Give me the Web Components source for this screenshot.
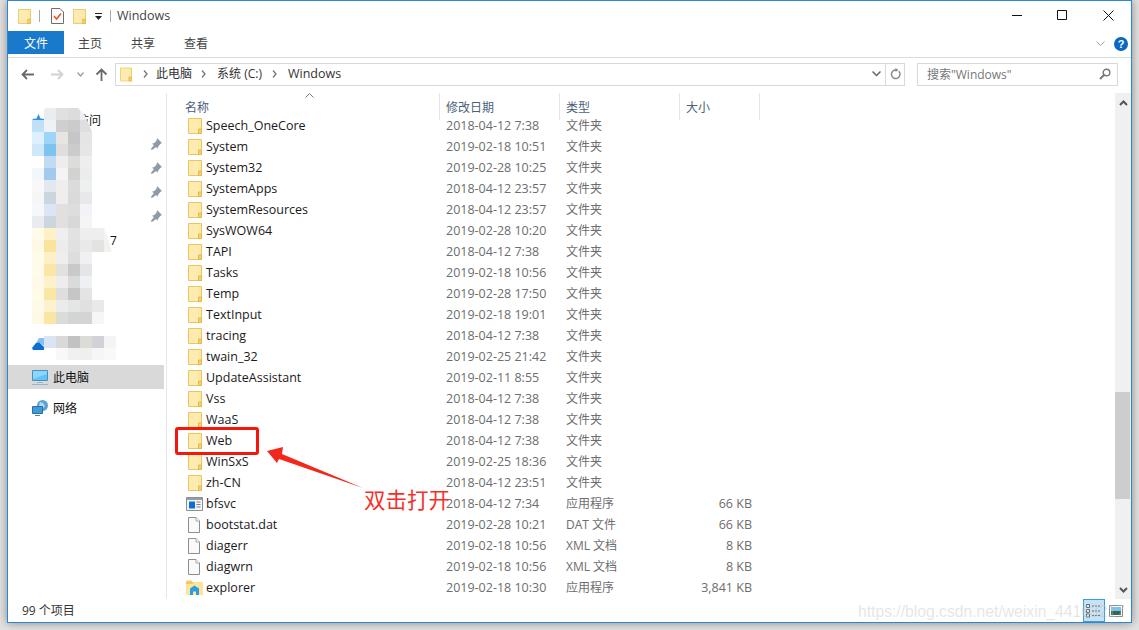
<!DOCTYPE html>
<html lang="zh-CN">
<head>
<meta charset="utf-8">
<title>Windows</title>
<style>
  html, body { margin: 0; height: 100%; background: #e2e2e2; overflow: hidden; }
  body { font-family: "Open Sans", "Noto Sans CJK SC", sans-serif; }
</style>
</head>
<body>
<explorer-window>
  <title-bar></title-bar>
  <ribbon-tabs></ribbon-tabs>
  <address-row></address-row>
  <div style="display:flex;flex:1;min-height:0">
    <nav-pane></nav-pane>
    <file-list></file-list>
  </div>
  <status-bar></status-bar>
</explorer-window>

<script>
// iconos compartidos
const FOLDER = (w = 14, h = 16) => `
  <svg width="${w}" height="${h}" viewBox="0 0 14 16" style="display:block;flex:none">
    <path d="M.5.500h13v15H.5z" fill="#fde9a6" stroke="#e9c65f"/>
    <path d="M1 1h9v14H1z" fill="#fdebb0"/>
    <path d="M10.500 11h3v4.500h-3z" fill="#f6d26c" stroke="#e3b94c"/>
  </svg>`;

const ICONS = {
  folder: FOLDER(),
  app: `<svg width="17" height="14" viewBox="0 0 17 14" style="display:block">
    <path d="M.5.500h16v13H.5z" fill="#f4f5f6" stroke="#8b8f94"/>
    <path d="M1 1h15v2H1z" fill="#9a9ea3"/>
    <path d="M3 4.500h6v7H3z" fill="#0b6fd6"/>
    <path d="M10.500 5h4M10.500 7.500h4M10.500 10h4" stroke="#7d8186"/>
  </svg>`,
  doc: `<svg width="12" height="16" viewBox="0 0 12 16" style="display:block">
    <path d="M.5.500h7.500l3.500 3.500v11.500H.5z" fill="#fafafa" stroke="#8e8e8e"/>
    <path d="M8 .500V4h3.500" fill="#fff" stroke="#a8a8a8"/>
  </svg>`,
  explorer: `<svg width="17" height="15" viewBox="0 0 17 15" style="display:block">
    <path d="M.5 2.500h5l1-2h-6z" fill="#f2cf66"/>
    <path d="M0 2h17v13H0z" fill="#fde49c"/>
    <path d="M0 2h8l-1.500 2H0z" fill="#f3c95e"/>
    <path d="M4 8.500l4.500-3 4.500 3V15h-3v-3.500H7V15H4z" fill="#2a9fe0"/>
  </svg>`,
};

class ExplorerWindow extends HTMLElement {
  constructor() {
    super();
    this.attachShadow({ mode: 'open' });
    this.shadowRoot.innerHTML = `
      <style>
        :host {
          display: flex;
          flex-direction: column;
          box-sizing: border-box;
          width: 1125px;
          height: 623px;
          margin: 0 7px;
          background: #fff;
          border: 1px solid #2b87d6;
          box-shadow: 0 0 9px rgba(0,0,0,.4);
          position: relative;
        }
        .mark { position: absolute; pointer-events: none; }
        .box {
          left: 167px; top: 426px; width: 78px; height: 22px;
          border: 3px solid #f5160c; border-radius: 3px;
        }
        .arrow { left: 0; top: 0; }
        .note {
          left: 356px; top: 485px;
          font: 21.5px/26px "Noto Sans CJK SC", sans-serif;
          color: #f5302a;
          white-space: nowrap;
        }
      </style>
      <slot></slot>
      <div class="mark box"></div>
      <svg class="mark arrow" width="400" height="520" viewBox="0 0 400 520">
        <path d="M259 450 L275 446 L274 453 L355 487 L271 458 L269 462 Z" fill="#f2281c"/>
      </svg>
      <div class="mark note">双击打开</div>
    `;
  }
}

class TitleBar extends HTMLElement {
  constructor() {
    super();
    this.attachShadow({ mode: 'open' });
    this.shadowRoot.innerHTML = `
      <style>
        :host {
          display: flex;
          align-items: center;
          height: 30px;
          padding-left: 10px;
          color: #444;
          font-size: 12.5px;
          flex: none;
        }
        .sep { width: 1px; height: 12px; background: #a8a8a8; }
        .controls { margin-left: auto; display: flex; }
        .controls svg { display: block; width: 46px; height: 30px; }
      </style>
      ${FOLDER(13, 15)}
      <span class="sep" style="margin-left:8px"></span>
      <svg width="13" height="16" viewBox="0 0 13 16" style="margin-left:11px">
        <path d="M.5.500h8.500l3.500 3.500v11.500H.5z" fill="#fafafa" stroke="#6e6e6e"/>
        <path d="M3 8l2.500 3L10 5.500" fill="none" stroke="#e8522a" stroke-width="1.500"/>
      </svg>
      <span style="margin-left:9px">${FOLDER(13, 15)}</span>
      <svg width="9" height="7" viewBox="0 0 9 7" style="margin-left:8px">
        <path d="M1 .500h7" stroke="#222"/><path d="M1 3h7L4.500 7z" fill="#222"/>
      </svg>
      <span class="sep" style="margin-left:7px"></span>
      <span style="margin-left:6px;padding-bottom:2px">Windows</span>
      <div class="controls">
        <svg viewBox="0 0 46 30"><path d="M19 14.500h10" stroke="#111"/></svg>
        <svg viewBox="0 0 46 30"><path d="M18.500 9.500h9v9h-9z" fill="none" stroke="#111"/></svg>
        <svg viewBox="0 0 46 30"><path d="M18.500 9.500l10 10M28.500 9.500l-10 10" stroke="#111"/></svg>
      </div>
    `;
  }
}

class RibbonTabs extends HTMLElement {
  constructor() {
    super();
    this.attachShadow({ mode: 'open' });
    this.shadowRoot.innerHTML = `
      <style>
        :host {
          display: flex;
          height: 26px;
          border-bottom: 1px solid #dadbdc;
          font-size: 12px;
          color: #444;
          flex: none;
          position: relative;
        }
        .file {
          width: 56px; height: 23px;
          background: #1979ca; color: #fff;
          display: flex; align-items: center; justify-content: center;
        }
        .tab { height: 23px; display: flex; align-items: center; margin-left: 29px; }
        .file + .tab { margin-left: 14px; }
        .right {
          margin-left: auto; display: flex; align-items: center; gap: 9px;
          height: 26px; padding-right: 3px;
        }
        .help {
          width: 14px; height: 14px; border-radius: 50%;
          background: #0a67c2; color: #fff;
          font: bold 11px/14px "Liberation Sans", sans-serif; text-align: center;
        }
      </style>
      <div class="file">文件</div>
      <div class="tab">主页</div>
      <div class="tab">共享</div>
      <div class="tab">查看</div>
      <div class="right">
        <svg width="9" height="6" viewBox="0 0 9 6"><path d="M.5.500l4 4 4-4" fill="none" stroke="#9a9a9a"/></svg>
        <div class="help">?</div>
      </div>
    `;
  }
}

class AddressRow extends HTMLElement {
  constructor() {
    super();
    this.attachShadow({ mode: 'open' });
    const chev = `<svg width="5" height="8" viewBox="0 0 5 8" style="display:block"><path d="M1 .500l3 3.500-3 3.500" fill="none" stroke="#777" stroke-width="1.300"/></svg>`;
    this.shadowRoot.innerHTML = `
      <style>
        :host {
          display: flex;
          align-items: center;
          height: 35px;
          flex: none;
          font-size: 12px;
          color: #333;
        }
        .buttons { width: 107px; display: flex; align-items: center; flex: none; }
        .path {
          box-sizing: border-box;
          width: 790px; height: 23px;
          border: 1px solid #d9d9d9;
          display: flex; align-items: center;
          padding-left: 4px;
          margin-top: -3px;
        }
        .path > * { flex: none; }
        .txt { padding-bottom: 2px; }
        .tail { margin-left: auto; display: flex; align-items: center; height: 100%; }
        .tail .sep { width: 1px; height: 100%; background: #d9d9d9; margin: 0 4px 0 4px; }
        .search {
          box-sizing: border-box;
          width: 201px; height: 23px;
          margin-left: 12px; margin-top: -3px;
          border: 1px solid #d9d9d9;
          display: flex; align-items: center; justify-content: space-between;
          padding: 0 6px 0 9px;
          color: #777;
        }
      </style>
      <div class="buttons">
        <svg width="13" height="11" viewBox="0 0 13 11" style="margin:-3px 0 0 13px"><path d="M13 5.500H2M6 1L1.500 5.500 6 10" fill="none" stroke="#6a6a6a" stroke-width="1.800"/></svg>
        <svg width="13" height="11" viewBox="0 0 13 11" style="margin:-3px 0 0 17px"><path d="M0 5.500h11M7 1l4.500 4.500L7 10" fill="none" stroke="#d2d2d2" stroke-width="1.800"/></svg>
        <svg width="7" height="5" viewBox="0 0 7 5" style="margin:-3px 0 0 13px"><path d="M.5.500L3.500 4l3-3.500" fill="none" stroke="#999" stroke-width="1.200"/></svg>
        <svg width="13" height="13" viewBox="0 0 13 13" style="margin:-3px 0 0 11px"><path d="M6.500 13V2M1.500 6.500l5-5 5 5" fill="none" stroke="#6a6a6a" stroke-width="1.800"/></svg>
      </div>
      <div class="path">
        ${FOLDER(12, 15)}
        <span style="margin-left:11px">${chev}</span>
        <span class="txt" style="margin-left:8px">此电脑</span>
        <span style="margin-left:9px">${chev}</span>
        <span class="txt" style="margin-left:11px">系统 (C:)</span>
        <span style="margin-left:10px">${chev}</span>
        <span class="txt" style="margin-left:11px;font-size:12.5px">Windows</span>
        <div class="tail">
          <svg width="9" height="6" viewBox="0 0 9 6"><path d="M.5.500l4 4 4-4" fill="none" stroke="#666" stroke-width="1.500"/></svg>
          <span class="sep"></span>
          <svg width="11" height="12" viewBox="0 0 11 12" style="margin-right:3px"><path d="M8.800 3.200a4.300 4.300 0 1 1-2.300-1.200" fill="none" stroke="#888" stroke-width="1.400"/><path d="M5.500 0l3 2-3 2z" fill="#888"/></svg>
        </div>
      </div>
      <div class="search">
        <span>搜索"Windows"</span>
        <svg width="12" height="12" viewBox="0 0 12 12"><circle cx="7.500" cy="4.500" r="3.300" fill="none" stroke="#777" stroke-width="1.400"/><path d="M5 7L1 11" stroke="#777" stroke-width="2"/></svg>
      </div>
    `;
  }
}

class NavItem extends HTMLElement {
  constructor() {
    super();
    this.attachShadow({ mode: 'open' });
    this.shadowRoot.innerHTML = `
      <style>
        :host {
          display: flex;
          align-items: center;
          height: 24px;
          padding-left: 24px;
          font-size: 12px;
          color: #111;
        }
        :host([selected]) { background: #d9d9d9; margin-right: 2px; }
        .icon { width: 21px; flex: none; display: flex; }
        .pin { margin-left: auto; margin-right: 4px; display: flex; }
      </style>
      <span class="icon"><slot name="icon"></slot></span>
      <slot></slot>
      <span class="pin"><slot name="pin"></slot></span>
    `;
  }
}

class PhotoMosaic extends HTMLElement {
  constructor() {
    super();
    this.attachShadow({ mode: 'open' });
    const rows = (this.getAttribute('rows') || '').split('|');
    this.shadowRoot.innerHTML = `
      <style>
        :host { display: block; position: absolute; }
        div { display: grid; grid-template-columns: repeat(7, 12px); grid-auto-rows: 12px; }
        i { display: block; }
      </style>
      <div>${rows.map(r => {
        const c = r.split(',');
        while (c.length < 7) c.push('-');
        return c.map(x => `<i style="background:${x === '-' ? 'transparent' : '#' + x}"></i>`).join('');
      }).join('')}</div>
    `;
  }
}

class NavPane extends HTMLElement {
  constructor() {
    super();
    this.attachShadow({ mode: 'open' });
    const pin = `<svg slot="pin" width="12" height="12" viewBox="0 0 12 12"><path d="M7 0l5 5-1.500.8-2.500 3-.3 2-1.700-1.700L2 12 .8 11l3-3.800L2 5.500l2-.3 2.500-2.500z" fill="#8f9aa6"/></svg>`;
    this.shadowRoot.innerHTML = `
      <style>
        :host {
          display: block;
          box-sizing: border-box;
          width: 159px;
          flex: none;
          position: relative;
          padding-top: 15px;
          border-right: 1px solid #e8e8e8;
        }
        photo-mosaic.a {
          left: 24px; top: 15px;
          clip-path: polygon(0 12px, 8px 4px, 14px 0, 46px 0, 52px 6px, 56px 14px, 60px 24px, 60px 120px, 72px 120px, 76px 130px, 80px 144px, 84px 144px, 84px 216px, 0 216px);
        }
        photo-mosaic.b { left: 24px; top: 243px; }
      </style>
      <nav-item>
        <svg slot="icon" width="13" height="13" viewBox="0 0 13 13"><path d="M6.500 0l2 4.500 4.500.5-3.500 3 1 4.500-4-2.500-4 2.500 1-4.500L0 5l4.500-.5z" fill="#2f93e0"/></svg>
        快速访问
      </nav-item>
      <nav-item>${pin}</nav-item>
      <nav-item>${pin}</nav-item>
      <nav-item>${pin}</nav-item>
      <nav-item>${pin}</nav-item>
      <nav-item><span style="padding-left:57px">7</span></nav-item>
      <div style="height:80px"></div>
      <nav-item>
        <svg slot="icon" width="15" height="14" viewBox="0 0 15 14">
          <path d="M0 11l4-5 3-1 4 4 2 2v2H1z" fill="#0a6fd0"/><path d="M4 6l3-5h6v6l-2 2-4-4z" fill="#8cc0ec"/>
        </svg>
      </nav-item>
      <div style="height:9px"></div>
      <nav-item selected>
        <svg slot="icon" width="16" height="15" viewBox="0 0 16 15">
          <path d="M.5.500h15v10H.5z" fill="#5fc2fa" stroke="#4e8fb8"/>
          <path d="M1 1h14v3L1 9z" fill="#8ad6fd"/>
          <path d="M5 12h6v1H5zM0 14h16v1H0z" fill="#9bb5ca"/>
        </svg>
        此电脑
      </nav-item>
      <div style="height:7px"></div>
      <nav-item>
        <svg slot="icon" width="16" height="16" viewBox="0 0 16 16">
          <circle cx="10.500" cy="5.500" r="5.500" fill="#5aa3d6"/>
          <path d="M8 2l3 1 2 3-3 3-1-2-2-1z" fill="#b5dcf3"/>
          <path d="M.5 6.500h10v7H.5z" fill="#3f9ad8" stroke="#2e6f9e"/>
          <path d="M3 15h5v1H3z" fill="#5e7f98"/>
        </svg>
        网络
      </nav-item>
      <photo-mosaic class="a" rows="-,e9edf0,e0e0e0,dcdcdc,eeeeee|bfe0f7,edf2f6,d0cfcd,cbcbcb,dedee0|dcf0fd,9dd4f8,e6e5e2,c6c6c6,e5e5e6|cfe8f8,7cc3f0,dfdedc,cbcbcb,e6e6e7|ffffff,c1dcf2,eeecec,dcdcdb,eeeef0|f2f7fb,a3c9ec,f4f4f4,d2d2d0,ebecec|f8f8f8,e1e8ef,efeded,dbdbdb,eeefef|f6f6f6,cad5dd,efeeec,dadada,e8e8ea|f6f7fa,dce5f6,e2e0de,dcdddd,f2f3f6|e9ecee,cbd6df,e1e0de,d8d8d8,f5f5f5|fffbe9,fdf1c5,efefef,e2e2e2,eeeeee,eeeeee,f4f4f5|fdf9e6,fae49b,ececec,e1e1e1,e9e9e9,e4e3e1,f2f2f3|fffbe9,fdf0c6,eeeeee,dcdddd,f0f0f3|fffbea,fae7a8,e2e1df,c9c9c9,e5e5e7|fef9e8,fdf1c9,eeecec,d9dbdb,eff0f3|fffbe8,fae6a5,dfdedc,c6c6c6,e4e4e6|fefae9,fdf2ce,ecebeb,e4e5e7,e2e0de,e8e9ea|fdf9e5,f9e6a3,dbdbd9,d3d4d4,d4d4d4,f5f6f8"></photo-mosaic>
      <photo-mosaic class="b" rows="-,d9e5f2,d9d9d9,c1c2c1,dcdcd7,d2d1d7,f3f4f6|-,ffffff,f8f8f8,f0f0f0,efefef,f6f6f6,f9f9f9"></photo-mosaic>
    `;
  }
}

class FileRow extends HTMLElement {
  constructor() {
    super();
    this.attachShadow({ mode: 'open' });
    const a = n => this.getAttribute(n) || '';
    this.shadowRoot.innerHTML = `
      <style>
        :host {
          display: grid;
          grid-template-columns: 279px 120px 120px 66px;
          align-items: center;
          height: 21px;
          font-size: 12.5px;
          color: #6d6d6d;
        }
        .name { display: flex; align-items: center; color: #1a1a1a; padding-left: 21px; }
        .ico { width: 18px; display: flex; flex: none; }
        .ico.wide { margin-left: -2px; width: 20px; }
        .cjk { font-size: 12px; padding-bottom: 2px; }
        .size { text-align: right; white-space: nowrap; }
      </style>
      <div class="name"><span class="ico ${a('icon') === 'folder' || a('icon') === 'doc' ? '' : 'wide'}">${ICONS[a('icon')]}</span>${a('name')}</div>
      <div>${a('date')}</div>
      <div class="cjk">${a('type')}</div>
      <div class="size">${a('size')}</div>
    `;
  }
}

class FileList extends HTMLElement {
  constructor() {
    super();
    this.attachShadow({ mode: 'open' });
    const files = [
      ['Speech_OneCore', '2018-04-12 7:38'],
      ['System', '2019-02-18 10:51'],
      ['System32', '2019-02-28 10:25'],
      ['SystemApps', '2018-04-12 23:57'],
      ['SystemResources', '2018-04-12 23:57'],
      ['SysWOW64', '2019-02-28 10:20'],
      ['TAPI', '2018-04-12 7:38'],
      ['Tasks', '2019-02-18 10:56'],
      ['Temp', '2019-02-28 17:50'],
      ['TextInput', '2019-02-18 19:01'],
      ['tracing', '2018-04-12 7:38'],
      ['twain_32', '2019-02-25 21:42'],
      ['UpdateAssistant', '2019-02-11 8:55'],
      ['Vss', '2018-04-12 7:38'],
      ['WaaS', '2018-04-12 7:38'],
      ['Web', '2018-04-12 7:38'],
      ['WinSxS', '2019-02-25 18:36'],
      ['zh-CN', '2018-04-12 23:51'],
      ['bfsvc', '2018-04-12 7:34', 'app', '应用程序', '66 KB'],
      ['bootstat.dat', '2019-02-28 10:21', 'doc', 'DAT 文件', '66 KB'],
      ['diagerr', '2019-02-18 10:56', 'doc', 'XML 文档', '8 KB'],
      ['diagwrn', '2019-02-18 10:56', 'doc', 'XML 文档', '8 KB'],
      ['explorer', '2019-02-18 10:30', 'explorer', '应用程序', '3,841 KB'],
    ];
    const rows = files.map(([name, date, icon = 'folder', type = '文件夹', size = '']) =>
      `<file-row name="${name}" date="${date}" icon="${icon}" type="${type}" size="${size}"></file-row>`
    ).join('');
    const heads = [['名称', 273], ['修改日期', 120], ['类型', 120], ['大小', 80]];
    this.shadowRoot.innerHTML = `
      <style>
        :host { display: flex; flex: 1; min-width: 0; position: relative; }
        .main { flex: 1; min-width: 0; }
        .head { display: flex; height: 22px; font-size: 12px; color: #4c607a; position: relative; }
        .head div {
          box-sizing: border-box;
          border-right: 1px solid #e5e5e5;
          padding: 5px 0 0 6px;
          height: 27px;
          background: #fff;
        }
        .head div:first-child { padding-left: 18px; }
        .sort { position: absolute; left: 138px; top: 0; }
        .rows { position: relative; }
        .bar {
          width: 16px; flex: none;
          background: #f0f0f0;
          display: flex; flex-direction: column; align-items: center;
          position: relative;
        }
        .thumb { position: absolute; left: 0; right: 1px; top: 299px; height: 107px; background: #cdcdcd; }
        .up { margin-top: 7px; }
        .down { margin-top: auto; margin-bottom: 6px; }
      </style>
      <div class="main">
        <div class="head">
          ${heads.map(([t, w]) => `<div style="width:${w}px">${t}</div>`).join('')}
          <svg class="sort" width="9" height="5" viewBox="0 0 9 5"><path d="M.5 4.500l4-4 4 4" fill="none" stroke="#7a7a7a"/></svg>
        </div>
        <div class="rows">${rows}</div>
      </div>
      <div class="bar">
        <svg class="up" width="9" height="6" viewBox="0 0 9 6"><path d="M1 5l3.500-3.500L8 5" fill="none" stroke="#555" stroke-width="2"/></svg>
        <div class="thumb"></div>
        <svg class="down" width="9" height="6" viewBox="0 0 9 6"><path d="M1 1l3.500 3.500L8 1" fill="none" stroke="#555" stroke-width="2"/></svg>
      </div>
    `;
  }
}

class StatusBar extends HTMLElement {
  constructor() {
    super();
    this.attachShadow({ mode: 'open' });
    this.shadowRoot.innerHTML = `
      <style>
        :host {
          display: flex;
          align-items: center;
          height: 23px;
          flex: none;
          padding-left: 14px;
          font-size: 12px;
          color: #333;
          position: relative;
        }
        .count { padding-bottom: 2px; }
        .views { margin-left: auto; display: flex; align-items: center; height: 100%; padding-right: 8px; }
        .on {
          box-sizing: border-box; width: 22px; height: 23px;
          border: 1px solid #3a9fdc; background: #c6e3f5;
          display: flex; align-items: center; justify-content: center;
        }
        .thumbs { margin-left: 4px; display: flex; }
        .wm {
          position: absolute; left: 850px; top: 2px;
          font: 15.7px/22px "Liberation Sans", sans-serif;
          color: rgba(190,190,190,.4);
          white-space: nowrap;
        }
      </style>
      <span class="count">99 个项目</span>
      <div class="views">
        <div class="on">
          <svg width="16" height="15" viewBox="0 0 16 15">
            <path d="M.5 1.500h3v3h-3zM.5 6.500h3v3h-3zM.5 11h3v3h-3z" fill="#fff" stroke="#666"/>
            <path d="M6 3h9M6 8h9M6 12.500h9" stroke="#666" stroke-dasharray="2 1"/>
          </svg>
        </div>
        <div class="thumbs">
          <svg width="14" height="12" viewBox="0 0 14 12">
            <path d="M.5.500h13v11H.5z" fill="#fff" stroke="#8a8a8a"/>
            <path d="M2 2h10v4H2z" fill="#7cc2ee"/><path d="M2 6h10v4H2z" fill="#2f6b4a"/>
          </svg>
        </div>
      </div>
      <div class="wm">https://blog.csdn.net/weixin_44163217</div>
    `;
  }
}

customElements.define('explorer-window', ExplorerWindow);
customElements.define('title-bar', TitleBar);
customElements.define('ribbon-tabs', RibbonTabs);
customElements.define('address-row', AddressRow);
customElements.define('nav-item', NavItem);
customElements.define('photo-mosaic', PhotoMosaic);
customElements.define('nav-pane', NavPane);
customElements.define('file-row', FileRow);
customElements.define('file-list', FileList);
customElements.define('status-bar', StatusBar);
</script>
</body>
</html>
